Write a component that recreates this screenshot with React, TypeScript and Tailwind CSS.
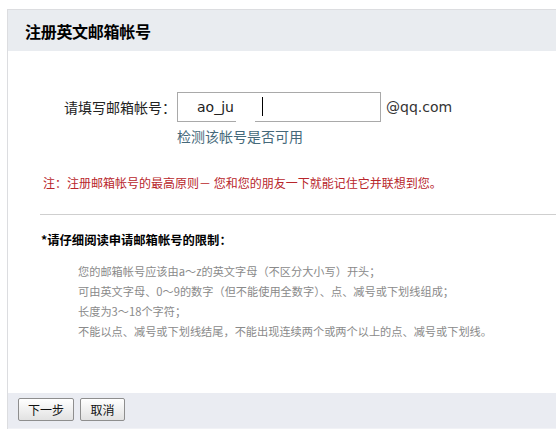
import React from "react";

const cjk = { fontFamily: '"Noto Sans CJK SC", "Noto Sans", sans-serif' };
const latin = { fontFamily: '"DejaVu Sans", "Noto Sans CJK SC", sans-serif' };

export default function App() {
  const rules = [
    "您的邮箱帐号应该由a～z的英文字母（不区分大小写）开头；",
    "可由英文字母、0～9的数字（但不能使用全数字）、点、减号或下划线组成；",
    "长度为3～18个字符；",
    "不能以点、减号或下划线结尾，不能出现连续两个或两个以上的点、减号或下划线。",
  ];
  return (
    <div className="w-[556px] h-[433px] bg-white pl-[7px] pt-[9px] overflow-hidden" style={cjk}>
      <div className="border-l border-t border-[#dcdde0] flex flex-col">
        <div className="h-[41px] bg-[#e9ecf0] flex items-center pl-[17px]">
          <span className="text-[16px] tracking-[-0.3px] font-bold text-black leading-none">注册英文邮箱帐号</span>
        </div>
        <div className="h-[342px] bg-white flex flex-col pt-[41px]">
          <div className="flex items-center h-[30px] pl-[56px]">
            <span className="w-[113px] text-[14px] leading-[14px] text-[#222]">请填写邮箱帐号：</span>
            <div className="relative w-[204px] h-[30px] border border-[#a9a9a9] bg-white flex items-center">
              <span className="ml-[19px] text-[14px] text-[#222]" style={latin}>ao_ju</span>
              <span className="absolute left-[84px] top-[4px] w-[1px] h-[19px] bg-black" />
              <span className="absolute left-[58px] bottom-[-2px] w-[19px] h-[4px] bg-white" />
            </div>
            <span className="ml-[5px] text-[14px] text-[#333]" style={latin}>@qq.com</span>
          </div>
          <div className="mt-[7px] ml-[169px] text-[14px] leading-[14px] text-[#45697a]">检测该帐号是否可用</div>
          <div className="mt-[30px] ml-[35px] text-[12px] leading-[20px] text-[#b8262b]">
            注：注册邮箱帐号的最高原则－ 您和您的朋友一下就能记住它并联想到您。
          </div>
          <div className="mt-[21px] ml-[32px] h-[1px] bg-[#cfcfcf]" />
          <div className="mt-[15px] ml-[33px] text-[12.3px] leading-[20px] font-bold text-black">
            *请仔细阅读申请邮箱帐号的限制：
          </div>
          <div className="mt-[11px] ml-[70px] flex flex-col">
            {rules.map((r) => (
              <div key={r} className="text-[11.2px] leading-[20px] text-[#8a8a8a] whitespace-nowrap">
                {r}
              </div>
            ))}
          </div>
        </div>
        <div className="h-[36px] bg-[#eaecf2] flex items-start pt-[5px] pl-[10px] gap-[6px] border-b border-[#f1f2f6]">
          <button className="w-[56px] h-[23px] border border-[#8e8e8e] rounded-[2px] bg-gradient-to-b from-white to-[#e2e2e2] text-[12px] text-[#111] leading-none">
            下一步
          </button>
          <button className="w-[45px] h-[23px] border border-[#8e8e8e] rounded-[2px] bg-gradient-to-b from-white to-[#e2e2e2] text-[12px] text-[#111] leading-none">
            取消
          </button>
        </div>
      </div>
    </div>
  );
}
